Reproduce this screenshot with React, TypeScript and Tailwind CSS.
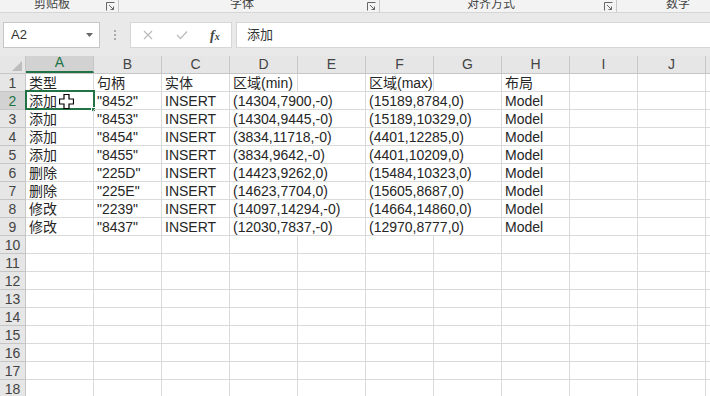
import React from 'react';

const cols = ['A', 'B', 'C', 'D', 'E', 'F', 'G', 'H', 'I', 'J'];

const data: string[][] = [
  ['类型', '句柄', '实体', '区域(min)', '', '区域(max)', '', '布局'],
  ['添加', '"8452"', 'INSERT', '(14304,7900,-0)', '', '(15189,8784,0)', '', 'Model'],
  ['添加', '"8453"', 'INSERT', '(14304,9445,-0)', '', '(15189,10329,0)', '', 'Model'],
  ['添加', '"8454"', 'INSERT', '(3834,11718,-0)', '', '(4401,12285,0)', '', 'Model'],
  ['添加', '"8455"', 'INSERT', '(3834,9642,-0)', '', '(4401,10209,0)', '', 'Model'],
  ['删除', '"225D"', 'INSERT', '(14423,9262,0)', '', '(15484,10323,0)', '', 'Model'],
  ['删除', '"225E"', 'INSERT', '(14623,7704,0)', '', '(15605,8687,0)', '', 'Model'],
  ['修改', '"2239"', 'INSERT', '(14097,14294,-0)', '', '(14664,14860,0)', '', 'Model'],
  ['修改', '"8437"', 'INSERT', '(12030,7837,-0)', '', '(12970,8777,0)', '', 'Model'],
];

const font = { fontFamily: '"Liberation Sans", "Noto Sans CJK SC", sans-serif' };

function Launcher() {
  return (
    <div className="flex shrink-0 items-center">
      <svg width="9" height="9" viewBox="0 0 9 9" className="ml-[2px] text-[#666]">
        <path d="M0.5 8.5V0.5H8.5" fill="none" stroke="currentColor" strokeWidth="1" />
        <path d="M3 3L7.5 7.5M7.5 4.5V7.5H4.5" fill="none" stroke="currentColor" strokeWidth="1" />
      </svg>
      <div className="ml-[3px] h-[12px] w-px bg-[#c8c8c8]" />
    </div>
  );
}

function Ribbon() {
  const group = (label: string, w: number) => (
    <div className="flex h-full shrink-0 items-center justify-center" style={{ width: w }}>
      <span className="-mt-[5px] text-[12px] leading-[14px] text-[#444]">{label}</span>
    </div>
  );
  return (
    <div className="flex h-[12px] items-start overflow-hidden bg-[#f3f3f3]">
      {group('剪贴板', 104)}
      <Launcher />
      {group('字体', 246)}
      <Launcher />
      {group('对齐方式', 222)}
      <Launcher />
      {group('数字', 122)}
    </div>
  );
}

function FormulaBar() {
  return (
    <div className="border-t border-[#d6d6d6] bg-[#e9e9e9] pt-[9px] pb-[6px]">
      <div className="flex h-[26px] items-stretch">
        <div className="ml-[3px] flex w-[97px] items-center justify-between border border-[#c6c6c6] bg-white pl-[7px] pr-[6px]">
          <span className="text-[13px] text-[#333]">A2</span>
          <svg width="7" height="4" viewBox="0 0 7 4"><path d="M0 0H7L3.5 4Z" fill="#666" /></svg>
        </div>
        <div className="flex w-[30px] flex-col items-center justify-center gap-[2px]">
          <div className="h-[2px] w-[2px] bg-[#aaa]" />
          <div className="h-[2px] w-[2px] bg-[#aaa]" />
          <div className="h-[2px] w-[2px] bg-[#aaa]" />
        </div>
        <div className="flex w-[102px] items-center border border-[#d6d6d6] bg-white">
          <svg width="10" height="10" viewBox="0 0 10 10" className="ml-[12px]">
            <path d="M1 1L9 9M9 1L1 9" stroke="#bdbdbd" strokeWidth="1.3" />
          </svg>
          <svg width="12" height="10" viewBox="0 0 12 10" className="ml-[23px]">
            <path d="M1 5L4.5 8.5L11 1.5" fill="none" stroke="#bdbdbd" strokeWidth="1.3" />
          </svg>
          <span className="ml-[22px] text-[14px] font-bold italic text-[#444]" style={{ fontFamily: '"Liberation Serif", serif' }}>
            f<span className="text-[10px]">x</span>
          </span>
        </div>
        <div className="ml-[4px] flex flex-1 items-center border border-r-0 border-[#d6d6d6] bg-white pl-[10px]">
          <span className="text-[13px] text-[#333]">添加</span>
        </div>
      </div>
    </div>
  );
}

function Cursor() {
  return (
    <svg width="15" height="15" viewBox="0 0 15 15" className="absolute left-[33px] top-[2px]">
      <path
        d="M5 0.5H10V5H14.5V10H10V14.5H5V10H0.5V5H5Z"
        fill="#fff"
        stroke="#000"
        strokeWidth="1.2"
      />
    </svg>
  );
}

function Sheet() {
  return (
    <div className="bg-white">
      {/* column header */}
      <div className="flex h-[18px] border-b border-[#c6c6c6] bg-[#e6e6e6]">
        <div className="relative w-[26px] shrink-0 border-r border-[#c6c6c6]">
          <svg width="10" height="10" viewBox="0 0 10 10" className="absolute bottom-[2px] right-[3px]">
            <path d="M10 0V10H0Z" fill="#bdbdbd" />
          </svg>
        </div>
        {cols.map((c) => (
          <div
            key={c}
            className={`flex w-[68px] shrink-0 items-end justify-center border-r border-[#c6c6c6] pb-px text-[14px] leading-[15px] ${
              c === 'A' ? 'border-b-2 border-b-[#217346] bg-[#d2d2d2] text-[#217346]' : 'text-[#444]'
            }`}
          >
            {c}
          </div>
        ))}
        <div className="flex-1" />
      </div>
      {Array.from({ length: 18 }, (_, i) => {
        const r = i + 1;
        const row = data[i] ?? [];
        return (
          <div key={r} className="flex h-[18px]">
            <div
              className={`flex w-[26px] shrink-0 items-end justify-center border-r border-b border-[#c6c6c6] text-[14px] leading-[15px] ${
                r === 2 ? 'bg-[#d2d2d2] text-[#217346]' : 'bg-[#e6e6e6] text-[#444]'
              }`}
            >
              {r}
            </div>
            {cols.map((c, j) => {
              const v = row[j] ?? '';
              const overflow = (j === 3 || j === 5) && r >= 2 && r <= 9;
              return (
                <div
                  key={c}
                  className={`relative flex w-[68px] shrink-0 items-end border-b border-[#dadada] pl-[3px] text-[14px] leading-[15px] whitespace-nowrap text-[#262626] ${
                    overflow ? 'z-10' : 'border-r'
                  }`}
                >
                  {v}
                  {r === 2 && j === 0 && (
                    <>
                      <div className="pointer-events-none absolute -left-[1px] -top-[2px] h-[20px] w-[70px] border-2 border-[#217346]" />
                      <div className="absolute -bottom-[3px] -right-[3px] h-[5px] w-[5px] border border-white bg-[#217346]" />
                      <Cursor />
                    </>
                  )}
                </div>
              );
            })}
            <div className="flex-1 border-b border-[#dadada]" />
          </div>
        );
      })}
    </div>
  );
}

export default function App() {
  return (
    <div className="h-[396px] w-[710px] overflow-hidden bg-white" style={font}>
      <Ribbon />
      <FormulaBar />
      <div className="h-[2px] bg-[#e9e9e9]" />
      <Sheet />
    </div>
  );
}
